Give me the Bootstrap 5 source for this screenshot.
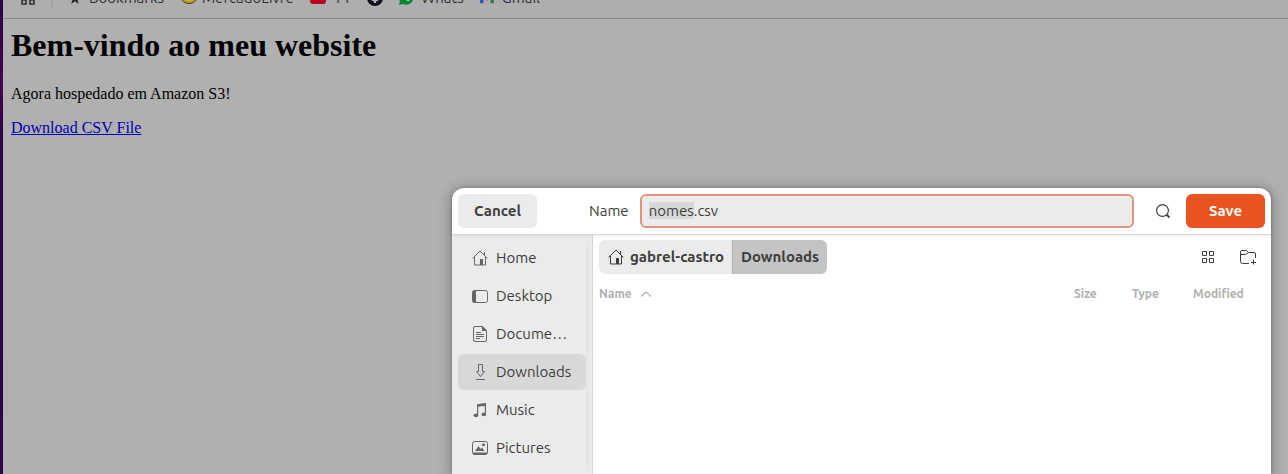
<!DOCTYPE html>
<html lang="pt-BR">
<head>
<meta charset="utf-8">
<meta name="viewport" content="width=device-width, initial-scale=1">
<title>Bem-vindo ao meu website</title>
<link href="https://cdn.jsdelivr.net/npm/bootstrap@5.3.0/dist/css/bootstrap.min.css" rel="stylesheet">
<style>
  body { background: #b0b0b0; font-family: Ubuntu, "Noto Sans", sans-serif; font-size: 15px; line-height: 20px; color: #3d3d3d; }
  svg { display: block; flex: none; }
  .desktop-edge { width: 3px; background: linear-gradient(#2c0048, #43044f 18%, #2c0048 30%, #2a0046 60%, #34034c); }
  .bookmarks { height: 19px; padding: 0 0 10px 18px; background: #aeaeae; border-bottom: 1px solid #8b8b8b; color: #303134; }
  .bookmarks a { color: inherit; height: 20px; }
  .bookmarks .divider { width: 2px; height: 16px; background: #a2a2a2; margin: 0 16px 0 14px; }
  .site { font-family: "Liberation Serif", serif; font-size: 16px; line-height: 18px; color: #000; padding: 8px; }
  .site h1 { font-size: 32px; line-height: 37px; font-weight: 700; margin-bottom: 21px; }
  .site p { margin-bottom: 16px; }
  .site a { color: #0000b0; }
  .save-dialog { left: 452px; right: 17px; top: 188px; border-radius: 12px 12px 0 0; background: #fff; box-shadow: 0 2px 14px 2px rgba(0,0,0,.25), 0 0 3px rgba(0,0,0,.25); }
  .dialog-head { height: 47px; padding: 6px; border-bottom: 1px solid #d8d8d8; box-shadow: 0 1px 3px rgba(0,0,0,.08); z-index: 1; }
  .dialog-btn { width: 79px; height: 34px; padding: 0; border: 0; border-radius: 6px; font-size: 15px; font-weight: 700; line-height: 20px; background: #ebebeb; color: #3d3d3d; }
  .dialog-btn.save { background: #e95420; color: #fff; }
  .name-label { margin: 0 11px 0 52px; }
  .name-input { height: 34px; padding: 0 7px 1px; border: 2px solid #e0947b; border-radius: 6px; background: #ebebeb; font-size: 15px; line-height: 18px; color: #3d3d3d; }
  .name-input:focus { background: #ebebeb; border-color: #e0947b; box-shadow: none; color: #3d3d3d; }
  .name-input::selection { background: #d8d8d8; color: #3d3d3d; }
  .tool { width: 40px; height: 34px; padding: 0; border: 0; background: none; color: #3d3d3d; }
  .search-tool { width: 16px; margin: 0 15px 0 21px; }
  .places { width: 141px; padding: 5px 6px; background: #ebebeb; border-right: 1px solid #d5d5d5; }
  .places nav { gap: 2px; }
  .places a { width: 128px; height: 36px; padding: 0 14px; gap: 8px; border-radius: 6px; color: #3d3d3d; }
  .places a.current { background: #d8d8d8; }
  .places svg { color: #666; }
  .track { width: 3px; right: 3px; top: 6px; bottom: 4px; background: #e5e5e5; }
  .files { padding: 5px 3px 0 6px; }
  .path-bar button { height: 34px; border: 0; font-size: 15px; font-weight: 700; color: #3d3d3d; background: #ebebeb; padding: 0 8px; white-space: nowrap; }
  .path-bar .home { width: 133px; border-radius: 6px 0 0 6px; gap: 6px; padding-left: 9px; }
  .path-bar .here { width: 95px; background: #c4c4c4; border-left: 1px solid #afafaf; border-radius: 0 6px 6px 0; }
  .file-table { table-layout: fixed; margin-top: 10px; font-size: 12px; }
  .file-table th { padding: 0; font-weight: 700; color: #b0b0b0; }
  .col-size { width: 58px; } .col-type { width: 61px; } .col-mod { width: 75px; }
</style>
<script src="https://cdn.jsdelivr.net/npm/bootstrap@5.3.0/dist/js/bootstrap.bundle.min.js"></script>
</head>
<body class="overflow-hidden">
<svg width="0" height="0" class="position-absolute" aria-hidden="true">
  <symbol id="house" viewBox="0 0 16 16"><path d="M.5 8.500 8 1l7.500 7.500M12.500 2v3M2.500 7v8h11V7" fill="none" stroke="currentColor"/><path d="M8 9h3v6H8z" fill="currentColor"/></symbol>
</svg>
<div class="d-flex min-vh-100">
  <div class="desktop-edge"></div>
  <div class="flex-fill">
    <nav class="bookmarks d-flex align-items-end overflow-hidden">
      <a href="#" aria-label="Apps" class="d-flex align-items-center"><svg width="16" height="14" viewBox="0 0 16 14" fill="none" stroke="#333" stroke-width="1.600"><path d="M1 1h4v4H1zM9 1h4v4H9zM1 9h4v4H1zM9 9h4v4H9z"/></svg></a>
      <span class="divider"></span>
      <a href="#" class="d-flex align-items-center text-decoration-none gap-2 me-3"><svg width="12" height="14" viewBox="0 0 14 14"><path d="M7 0 8.700 5H14L9.700 8.200 11.300 14 7 10.800 2.700 14l1.600-5.800L0 5h5.300z" fill="#2a2a2a"/></svg>Bookmarks</a>
      <a href="#" class="d-flex align-items-center text-decoration-none gap-1 me-3"><svg width="18" height="16" viewBox="0 0 18 16"><ellipse cx="9" cy="7" rx="8" ry="6.500" fill="#c0a313" stroke="#3c3a32"/><path d="M2 8c4-3 10-3 14 0l-5 2.500H7z" fill="#c8c8c8"/></svg>MercadoLivre</a>
      <a href="#" class="d-flex align-items-center text-decoration-none gap-2 me-3"><svg width="16" height="16" viewBox="0 0 16 16"><rect y="1" width="16" height="13" rx="3" fill="#b5001f"/><path d="m6 4 5 3-5 3z" fill="#ccc"/></svg>YT</a>
      <a href="#" aria-label="GitHub" class="d-flex align-items-center me-3"><svg width="16" height="16" viewBox="0 0 16 16"><circle cx="8" cy="8" r="8" fill="#11121d"/><path d="M4 3c-2 5 0 8 3 8.500v1.500h2v-1.500c3-.5 5-3.500 3-8.500L8 5z" fill="#b0b0b0"/></svg></a>
      <a href="#" class="d-flex align-items-center text-decoration-none gap-2 me-3"><svg width="14" height="14" viewBox="0 0 14 14"><path d="M0 14 1 10a7 7 0 1 1 3 3z" fill="#07882c"/><path d="M4 4c0 3 3 6 6 6l1-2-2-1-1 1-2-2 1-1-1-2z" fill="#ccc"/></svg>Whats</a>
      <a href="#" class="d-flex align-items-center text-decoration-none gap-2"><svg width="14" height="12" viewBox="0 0 16 12"><path d="M0 1h4v11H0z" fill="#2e5cac"/><path d="M12 1h4v11h-4z" fill="#248140"/><path d="m0 1 8 6 8-6v2l-8 6-8-6z" fill="#a93229"/></svg>Gmail</a>
    </nav>
    <main class="site">
      <h1>Bem-vindo ao meu website</h1>
      <p>Agora hospedado em Amazon S3!</p>
      <a href="#">Download CSV File</a>
    </main>
  </div>
</div>

<section class="save-dialog position-absolute bottom-0 d-flex flex-column" role="dialog" aria-label="Save">
  <header class="dialog-head d-flex align-items-center position-relative">
    <button type="button" class="btn dialog-btn">Cancel</button>
    <label for="filename" class="name-label">Name</label>
    <input id="filename" type="text" class="form-control name-input flex-fill w-auto" value="nomes.csv" spellcheck="false">
    <button type="button" class="tool search-tool" aria-label="Search"><svg width="16" height="16" viewBox="0 0 16 16" fill="none" stroke="currentColor"><circle cx="7.500" cy="7.500" r="5.900" stroke-width="1.200"/><path d="m11.500 11.500 3 3" stroke-width="1.800"/></svg></button>
    <button type="button" class="btn dialog-btn save">Save</button>
  </header>
  <div class="d-flex flex-fill">
    <aside class="places position-relative">
      <nav class="d-flex flex-column">
        <a href="#" class="d-flex align-items-center text-decoration-none"><svg width="16" height="16"><use href="#house"/></svg>Home</a>
        <a href="#" class="d-flex align-items-center text-decoration-none"><svg width="16" height="16" viewBox="0 0 16 16"><rect x=".5" y="2.500" width="15" height="12" rx="2" fill="none" stroke="currentColor"/><path d="M2 2.500h2v12H2a1.500 1.500 0 0 1-1.500-1.500V4A1.500 1.500 0 0 1 2 2.500z" fill="currentColor"/></svg>Desktop</a>
        <a href="#" class="d-flex align-items-center text-decoration-none"><svg width="16" height="16" viewBox="0 0 16 16"><path d="M3 .5h7.500l4 4V14a1.500 1.500 0 0 1-1.500 1.500H3A1.500 1.500 0 0 1 1.500 14V2A1.500 1.500 0 0 1 3 .5zM4 6.500h5M4 8.500h8M4 10.500h8M4 12.500h4" fill="none" stroke="currentColor"/><path d="M10 0v5h5z" fill="currentColor"/></svg>Docume…</a>
        <a href="#" class="current d-flex align-items-center text-decoration-none"><svg width="16" height="16" viewBox="0 0 16 16" fill="none" stroke="currentColor"><path d="M6.500.5h4v7h2l-4 5-4-5h2zM4 15.500h9"/></svg>Downloads</a>
        <a href="#" class="d-flex align-items-center text-decoration-none"><svg width="16" height="16" viewBox="0 0 16 16" fill="currentColor"><path d="M5 2.500Q9 1 14 1v3Q9 4 5 5z"/><path d="M5 2h1.200v11H5zM12.800 1H14v10.500h-1.200z"/><ellipse cx="3.900" cy="13.300" rx="2.300" ry="1.900"/><ellipse cx="11.900" cy="12.300" rx="2.300" ry="1.900"/></svg>Music</a>
        <a href="#" class="d-flex align-items-center text-decoration-none"><svg width="16" height="16" viewBox="0 0 16 16"><rect x=".5" y="1.500" width="15" height="13" rx="2" fill="none" stroke="currentColor"/><path d="M1 12.500h14V13l-1 2H2l-1-2zM3 11l3.500-5 2 3L10 7.500l2.500 3.500z" fill="currentColor"/><circle cx="11.500" cy="4.800" r="1.500" fill="currentColor"/></svg>Pictures</a>
      </nav>
      <div class="track position-absolute"></div>
    </aside>
    <div class="files flex-fill">
      <div class="d-flex align-items-center">
        <div class="path-bar d-flex me-auto">
          <button type="button" class="home d-flex align-items-center"><svg width="16" height="16"><use href="#house"/></svg>gabrel-castro</button>
          <button type="button" class="here">Downloads</button>
        </div>
        <button type="button" class="tool d-flex align-items-center justify-content-center" aria-label="Grid view"><svg width="16" height="16" viewBox="0 0 16 16" fill="none" stroke="currentColor"><path d="M2.500 2.500h4v4h-4zM9.500 2.500h4v4h-4zM2.500 9.500h4v4h-4zM9.500 9.500h4v4h-4z"/></svg></button>
        <button type="button" class="tool d-flex align-items-center justify-content-center" aria-label="New folder"><svg width="18" height="16" viewBox="0 0 18 16" fill="none" stroke="currentColor"><path d="M10 14.500H3.500a2 2 0 0 1-2-2V3A1.500 1.500 0 0 1 3 1.500h4.500l2 2H15A1.500 1.500 0 0 1 16.500 5v4M1.500 5.500h5l3-2M14.500 10.500v5M12 13.500h5"/></svg></button>
      </div>
      <table class="file-table w-100">
        <thead><tr>
          <th scope="col"><span class="d-flex align-items-center gap-2">Name <svg width="12" height="8" viewBox="0 0 12 8" fill="none" stroke="currentColor" stroke-width="1.200"><path d="m1 6.500 5-4.500 5 4.500"/></svg></span></th>
          <th scope="col" class="col-size">Size</th><th scope="col" class="col-type">Type</th><th scope="col" class="col-mod">Modified</th>
        </tr></thead>
      </table>
    </div>
  </div>
</section>
<script>
  const filename = document.getElementById('filename');
  filename.focus();
  filename.setSelectionRange(0, filename.value.lastIndexOf('.'));
</script>
</body>
</html>
